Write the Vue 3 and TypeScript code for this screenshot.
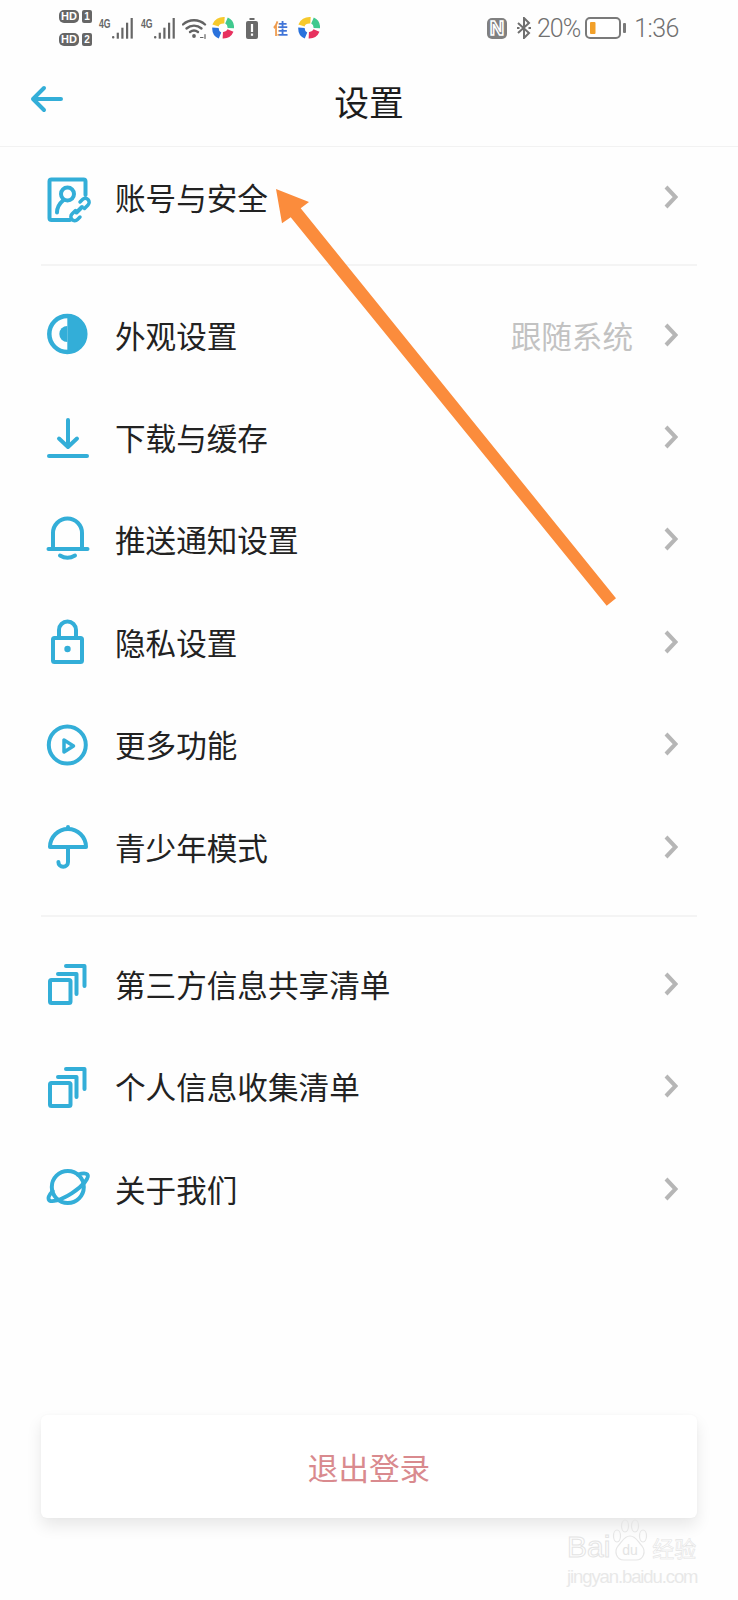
<template>
  <div class="page">
    <header class="top">
      <div class="status">
        <div class="sim">
          <div class="sim-line"><span class="hd">HD</span><span class="num">1</span></div>
          <div class="sim-line"><span class="hd">HD</span><span class="num">2</span></div>
        </div>
        <svg v-for="n in 2" :key="n" class="signal" width="34" height="21" viewBox="0 0 34 21">
          <text x="0" y="10" class="g4" textLength="11.500" lengthAdjust="spacingAndGlyphs">4G</text>
          <rect x="13" y="18" width="2.400" height="2.600" rx="1" />
          <rect x="17.700" y="14.700" width="2.200" height="6" />
          <rect x="22.300" y="9.700" width="2.200" height="11" />
          <rect x="27" y="4.700" width="2.200" height="16" />
          <rect x="31.600" y="0" width="2.200" height="20.600" />
        </svg>
        <svg class="wifi" width="25" height="21" viewBox="0 0 25 21" fill="none" stroke="#636363" stroke-width="2.400" stroke-linecap="round">
          <path d="M1 6.500C7 .8 17 .8 23 6.500" />
          <path d="M4.500 10.500c4.300-3.800 10.700-3.800 15 0" />
          <path d="M8 14c2.500-2 5.500-2 8 0" />
          <circle cx="12" cy="18" r="1.900" fill="#636363" stroke="none" />
          <path d="M18.500 19.500h2.500M23 16.500v4" stroke-width="1.200" />
        </svg>
        <svg class="swirl" width="22" height="22" viewBox="0 0 22 22" fill="none" stroke-width="6.500">
          <path d="M3.500 8.500C4.500 5 8 3 12.500 3.300" stroke="#f6c92d" />
          <path d="M14.500 3.500c3 1.300 4.500 4 4.300 7.700" stroke="#40c98e" />
          <path d="M18.500 13.500c-1.300 3-4 5-7.700 4.800" stroke="#e7315f" />
          <path d="M8 18.500C4.800 17.200 3.200 15 3.500 10.800" stroke="#2a72dc" />
        </svg>
        <svg class="alert" width="12" height="21" viewBox="0 0 12 21">
          <rect x="3.500" y="0" width="5" height="2" fill="#6a6a6a" />
          <rect x="0" y="3" width="12" height="18" rx="2" fill="#6a6a6a" />
          <rect x="4.900" y="6" width="2.200" height="8" fill="#fff" />
          <rect x="4.900" y="15.500" width="2.200" height="2.300" fill="#fff" />
        </svg>
        <span class="jia">佳</span>
        <svg class="swirl swirl-last" width="22" height="22" viewBox="0 0 22 22" fill="none" stroke-width="6.500">
          <path d="M3.500 8.500C4.500 5 8 3 12.500 3.300" stroke="#f6c92d" />
          <path d="M14.500 3.500c3 1.300 4.500 4 4.300 7.700" stroke="#40c98e" />
          <path d="M18.500 13.500c-1.300 3-4 5-7.700 4.800" stroke="#e7315f" />
          <path d="M8 18.500C4.800 17.200 3.200 15 3.500 10.800" stroke="#2a72dc" />
        </svg>

        <div class="status-right">
          <span class="nfc">N</span>
          <svg class="bt" width="16" height="22" viewBox="0 0 16 22" fill="none" stroke="#6f6f6f" stroke-width="2">
            <path d="M2 6l11 10-5 5V1l5 5L2 16" />
            <path d="M1 11h2.500M12.500 11H15" />
          </svg>
          <span class="pct">20%</span>
          <svg class="battery" width="41" height="22" viewBox="0 0 41 22">
            <rect x="1" y="1" width="34" height="20" rx="4" fill="#fff" stroke="#7a7a7a" stroke-width="2" />
            <rect x="5" y="5" width="5.500" height="12" rx="1" fill="#f2a029" />
            <rect x="38" y="6" width="3" height="10" rx="1" fill="#7a7a7a" />
          </svg>
          <span class="time">1:36</span>
        </div>
      </div>

      <nav class="nav">
        <svg class="back" width="34" height="28" viewBox="0 0 34 28" fill="none" stroke="#33aed8" stroke-width="4" stroke-linecap="round" stroke-linejoin="round">
          <path d="M3 14h28M14 3L3 14l11 11" />
        </svg>
        <h1 class="title">设置</h1>
        <span />
      </nav>
    </header>

    <section v-for="(group, g) in groups" :key="g" class="group">
      <div v-for="row in group" :key="row.label" class="row">
        <svg class="icon" width="52" height="52" viewBox="0 0 52 52" fill="none" stroke="#33aed8" stroke-width="4" stroke-linecap="round" stroke-linejoin="round">
          <template v-if="row.icon === 'account'">
            <path d="M28 46H9.500a2 2 0 0 1-2-2V7.500a2 2 0 0 1 2-2H41.500a2 2 0 0 1 2 2V21" />
            <circle cx="25.500" cy="20" r="6.500" />
            <path d="M15 38.500c0-6 3-9.500 6.500-12.500" />
            <path d="M38 28l2.500-2.500a3.800 3.800 0 0 1 5.500 5.500l-3.500 3.500" stroke-width="3.500" />
            <path d="M38 43l-2.500 2.500a3.800 3.800 0 0 1-5.500-5.500l3.500-3.500" stroke-width="3.500" />
            <path d="M34.500 38.500l5.500-5.500" stroke-width="4" />
          </template>
          <template v-else-if="row.icon === 'theme'">
            <circle cx="25.300" cy="23" r="18" stroke-width="4.500" />
            <path d="M25.300 5a18 18 0 0 1 0 36z" fill="#33aed8" stroke="none" />
            <path d="M25.300 15a8 8 0 0 0 0 16z" fill="#33aed8" stroke="none" />
          </template>
          <template v-else-if="row.icon === 'download'">
            <path d="M7 43h38" />
            <path d="M26 7v27M17 25.500L26 34l9-8.500" />
          </template>
          <template v-else-if="row.icon === 'bell'">
            <path d="M11 33V17a14.500 14.500 0 0 1 29 0v16" />
            <path d="M6.500 33h39" stroke-width="4" />
            <path d="M18 39.500q7.500 4.500 15 0" />
          </template>
          <template v-else-if="row.icon === 'lock'">
            <rect x="11" y="20" width="29" height="24" rx="1.500" />
            <path d="M17 20v-8a8.500 8.500 0 0 1 17 0v8" />
            <circle cx="25.500" cy="31" r="3.200" fill="#33aed8" stroke="none" />
          </template>
          <template v-else-if="row.icon === 'play'">
            <circle cx="25.300" cy="24" r="18.500" />
            <path d="M22 19v12l9.500-6z" stroke-width="3.500" />
          </template>
          <template v-else-if="row.icon === 'umbrella'">
            <path d="M8 24a18 18 0 0 1 36 0z" />
            <path d="M26 24v15a4.800 4.800 0 0 1-9.600 0" />
            <path d="M26 4v1" />
          </template>
          <template v-else-if="row.icon === 'copy'">
            <rect x="8" y="20" width="20.500" height="23" rx="1.500" />
            <path d="M16 14h18.500v20" />
            <path d="M24 6h18.500v20" />
          </template>
          <template v-else-if="row.icon === 'planet'">
            <circle cx="25.800" cy="22" r="16" />
            <g transform="rotate(-33 26 22)">
              <path d="M11 17A23 7 0 1 0 41 17" />
            </g>
          </template>
        </svg>
        <span class="label">{{ row.label }}</span>
        <span v-if="row.value" class="value">{{ row.value }}</span>
        <svg class="chevron" width="14" height="24" viewBox="0 0 14 24" fill="none" stroke="#b6b6b6" stroke-width="4">
          <path d="M2 2l9.500 10L2 22" />
        </svg>
      </div>
    </section>

    <button class="logout">退出登录</button>

    <svg class="pointer" width="738" height="1600" viewBox="0 0 738 1600">
      <polygon points="276,189 309,202 300.700,208.300 616,598.300 606.700,605.700 290.700,217.300 282,223.300" fill="#fb8c3c" />
    </svg>

    <div class="mark">
      <div class="mark-top">
        <span>Bai</span>
        <svg width="40" height="43" viewBox="0 0 40 43" fill="none" stroke="#e6e6e6" stroke-width="1.200">
          <ellipse cx="7" cy="17" rx="3.500" ry="6" />
          <ellipse cx="15" cy="7" rx="3.500" ry="6" />
          <ellipse cx="25" cy="7" rx="3.500" ry="6" />
          <ellipse cx="33" cy="17" rx="3.500" ry="6" />
          <path d="M20 17c6 0 8 6 12 10 4 5 2 14-6 14H14C6 41 4 32 8 27c4-4 6-10 12-10z" />
          <text x="20" y="36" class="mark-du">du</text>
        </svg>
        <span class="mark-cn">经验</span>
      </div>
      <div class="mark-url">jingyan.baidu.com</div>
    </div>
  </div>
</template>

<script setup lang="ts">
interface Row {
  icon: string
  label: string
  value?: string
}

const groups: Row[][] = [
  [{ icon: 'account', label: '账号与安全' }],
  [
    { icon: 'theme', label: '外观设置', value: '跟随系统' },
    { icon: 'download', label: '下载与缓存' },
    { icon: 'bell', label: '推送通知设置' },
    { icon: 'lock', label: '隐私设置' },
    { icon: 'play', label: '更多功能' },
    { icon: 'umbrella', label: '青少年模式' },
  ],
  [
    { icon: 'copy', label: '第三方信息共享清单' },
    { icon: 'copy', label: '个人信息收集清单' },
    { icon: 'planet', label: '关于我们' },
  ],
]
</script>

<style>
html,
body {
  margin: 0;
  background: #fff;
}
</style>

<style scoped>
.page {
  position: relative;
  display: flex;
  flex-direction: column;
  width: 738px;
  height: 1600px;
  overflow: hidden;
  background: #fefefe;
  font-family: "Noto Sans CJK SC", "Noto Sans", sans-serif;
  color: #222;
}

.top {
  height: 147px;
  margin-bottom: -1px;
  border-bottom: 1px solid #f2f2f2;
  box-sizing: border-box;
}

.status {
  display: flex;
  align-items: center;
  height: 56px;
  padding: 0 59px;
}

.sim {
  display: flex;
  flex-direction: column;
  gap: 10px;
  width: 33px;
}

.sim-line {
  display: flex;
  align-items: center;
  justify-content: space-between;
}

.hd,
.num {
  display: flex;
  align-items: center;
  justify-content: center;
  height: 13px;
  background: #666;
  color: #fff;
  font-family: "Liberation Sans", sans-serif;
  font-weight: 700;
  line-height: 13px;
}

.hd {
  width: 20px;
  border-radius: 5px;
  font-size: 11px;
}

.num {
  width: 10px;
  border-radius: 2px;
  font-size: 10px;
}

.signal {
  margin-left: 7px;
  fill: #666;
  overflow: visible;
}

.signal + .signal {
  margin-left: 8px;
}

.g4 {
  font-family: "Liberation Sans", sans-serif;
  font-size: 13px;
  font-weight: 700;
}

.wifi {
  margin-left: 7px;
}

.swirl {
  margin-left: 5px;
}

.alert {
  margin-left: 12px;
}

.jia {
  width: 15px;
  margin-left: 15px;
  background: linear-gradient(90deg, #ef9a4a 35%, #3f74d8 45%);
  -webkit-background-clip: text;
  background-clip: text;
  color: transparent;
  font-size: 15px;
  font-weight: 700;
  line-height: 20px;
}

.swirl-last {
  margin-left: 10px;
}

.status-right {
  display: flex;
  align-items: center;
  margin-left: auto;
  color: #707070;
  font-family: Roboto, sans-serif;
  font-size: 25px;
  font-weight: 300;
}

.nfc {
  width: 20px;
  height: 21px;
  border-radius: 5px;
  background: #808080;
  color: #808080;
  -webkit-text-stroke: 1.5px #fff;
  font-family: "Liberation Sans", sans-serif;
  font-size: 20px;
  font-weight: 700;
  line-height: 21px;
  text-align: center;
}

.bt {
  margin-left: 9px;
}

.pct {
  margin-left: 5px;
  letter-spacing: -1px;
}

.battery {
  margin-left: 5px;
}

.time {
  margin-left: 8px;
  letter-spacing: -0.5px;
}

.nav {
  display: grid;
  grid-template-columns: 1fr auto 1fr;
  align-items: center;
  height: 90px;
}

.back {
  margin: -4px 0 0 30px;
}

.title {
  margin: 0;
  font-size: 34.800px;
  font-weight: 400;
  line-height: 48px;
  color: #1c1c1c;
}

.group {
  width: 656px;
  margin-left: 41px;
  padding-bottom: 16px;
  border-bottom: 2px solid #f4f4f4;
}

.group + .group {
  padding-top: 17px;
}

.group:nth-of-type(2) {
  padding-bottom: 17px;
}

.group:last-of-type {
  padding-top: 16px;
  border-bottom: 0;
}

.row {
  display: flex;
  align-items: center;
  height: 102.400px;
  margin-left: -41px;
  padding-right: 19px;
}

.icon {
  flex: none;
  margin-top: 5px;
  margin-left: 42px;
}

.label {
  margin-left: 21px;
  font-size: 30.600px;
  line-height: 40px;
  color: #222;
}

.value {
  margin-left: auto;
  font-size: 30.600px;
  line-height: 40px;
  color: #c2c2c2;
}

.chevron {
  flex: none;
  margin-left: 31px;
}

.label + .chevron {
  margin-left: auto;
}

.logout {
  display: block;
  height: 103px;
  margin: auto 41px 82px;
  padding: 0;
  border: 0;
  border-radius: 6px;
  background: #fff;
  box-shadow: 0 8px 16px rgba(0, 0, 0, 0.09), 0 0 3px rgba(0, 0, 0, 0.03);
  color: #d98a8e;
  font-family: inherit;
  font-size: 30.600px;
}

.pointer {
  position: absolute;
  top: 0;
  left: 0;
  pointer-events: none;
}

.mark {
  position: absolute;
  top: 1518px;
  left: 567px;
  width: 132px;
  color: #e8e8e8;
  font-family: "Liberation Sans", sans-serif;
}

.mark-top {
  display: flex;
  align-items: flex-end;
  height: 44px;
  font-size: 30px;
  line-height: 30px;
  color: transparent;
  -webkit-text-stroke: 1px #e4e4e4;
}

.mark-cn {
  margin-left: 2px;
  font-family: "Noto Sans CJK SC", sans-serif;
  font-size: 22px;
  -webkit-text-stroke: 0.6px #e4e4e4;
}

.mark-du {
  fill: #e4e4e4;
  stroke: none;
  font-size: 14px;
  text-anchor: middle;
  -webkit-text-stroke: 0;
}

.mark-url {
  margin-top: 3px;
  font-size: 18.500px;
  line-height: 24px;
  letter-spacing: -1.100px;
  white-space: nowrap;
}
</style>
